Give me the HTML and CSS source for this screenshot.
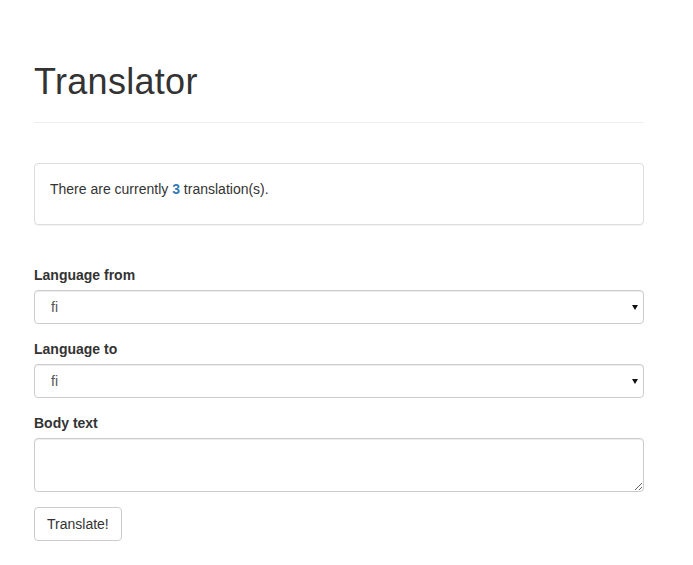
FILE: index.html
```html
<!DOCTYPE html>
<html lang="en">
<head>
<meta charset="utf-8">
<title>Translator</title>
<link rel="stylesheet" href="styles.css">
</head>
<body>
<div class="container">
  <div class="page-header">
    <h1>Translator</h1>
  </div>
  <div class="panel">
    <p>There are currently <strong class="count">3</strong> translation(s).</p>
  </div>
  <form class="form">
    <div class="form-group">
      <label for="from">Language from</label>
      <div class="select-wrap">
        <select id="from" class="form-control"><option>fi</option></select>
        <span class="caret"></span>
      </div>
    </div>
    <div class="form-group">
      <label for="to">Language to</label>
      <div class="select-wrap">
        <select id="to" class="form-control"><option>fi</option></select>
        <span class="caret"></span>
      </div>
    </div>
    <div class="form-group">
      <label for="body">Body text</label>
      <textarea id="body" class="form-control textarea" rows="2"></textarea>
    </div>
    <button type="button" class="btn">Translate!</button>
  </form>
</div>
</body>
</html>
```
FILE: styles.css
```css
* { box-sizing: border-box; }
html, body { margin: 0; padding: 0; background: #fff; }
body {
  font-family: "Liberation Sans", Arial, Helvetica, sans-serif;
  font-size: 14px;
  line-height: 20px;
  color: #333;
}
.container {
  width: 644px;
  padding: 62px 0 0 34px;
}
.page-header {
  padding-bottom: 20px;
  border-bottom: 1px solid #eee;
}
h1 {
  margin: 0;
  font-size: 36px;
  font-weight: 500;
  line-height: 40px;
  letter-spacing: 0.3px;
  color: #333;
}
.panel {
  margin-top: 40px;
  border: 1px solid #ddd;
  border-radius: 4px;
  padding: 15px 15px 15px 15px;
  box-shadow: 0 1px 1px rgba(0,0,0,.05);
}
.panel p { margin: 0 0 10px; }
.count { color: #337ab7; font-weight: bold; }
.form { margin-top: 40px; }
.form-group { margin-bottom: 15px; }
label {
  display: block;
  font-weight: bold;
  margin-bottom: 5px;
}
.select-wrap { position: relative; }
.form-control {
  display: block;
  width: 100%;
  height: 34px;
  padding: 6px 12px;
  font-family: inherit;
  font-size: 14px;
  line-height: 20px;
  color: #555;
  background: #fff;
  border: 1px solid #ccc;
  border-radius: 4px;
  box-shadow: inset 0 1px 1px rgba(0,0,0,.075);
  margin: 0;
}
select.form-control {
  -webkit-appearance: none;
  appearance: none;
  padding-left: 16px;
}
.caret {
  position: absolute;
  right: 6px;
  top: 15px;
  width: 0;
  height: 0;
  border-left: 3px solid transparent;
  border-right: 3px solid transparent;
  border-top: 5px solid #111;
  pointer-events: none;
}
.textarea {
  height: 54px;
  resize: vertical;
}
.btn {
  display: inline-block;
  height: 34px;
  padding: 6px 12px;
  font-family: inherit;
  font-size: 14px;
  line-height: 20px;
  color: #333;
  background: #fff;
  border: 1px solid #ccc;
  border-radius: 4px;
  cursor: pointer;
}
```
